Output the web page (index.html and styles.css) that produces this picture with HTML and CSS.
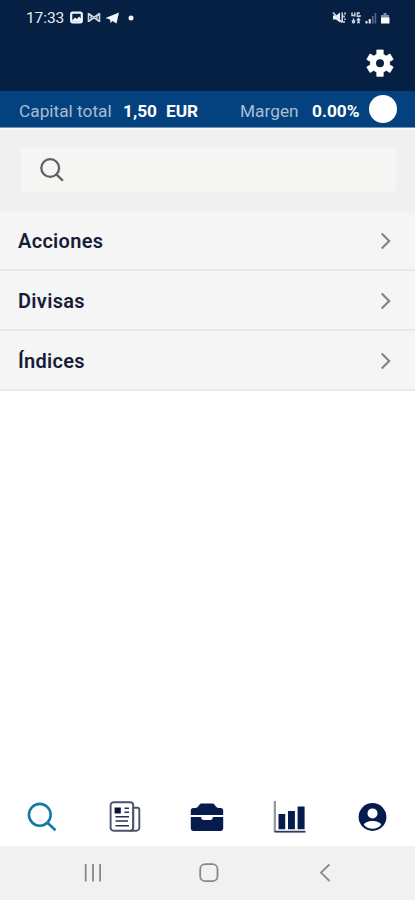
FILE: index.html
```html
<!DOCTYPE html>
<html lang="es">
<head>
<meta charset="utf-8">
<meta name="viewport" content="width=device-width, initial-scale=1">
<title>Mercados</title>
<link rel="stylesheet" href="styles.css">
</head>
<body>
<div class="app">
  <header class="header">
    <div class="status">
      <span class="time">17:33</span>
      <svg class="status-left" width="66" height="16" viewBox="0 0 66 16" fill="none">
        <rect x="1.200" y="2.700" width="10.600" height="9.600" rx="1.600" stroke="#f2f5fa" stroke-width="2.200"/>
        <path d="M2 10.500l3-3 2 1.500 2-2.500 3 3v2H2z" fill="#f2f5fa"/>
        <path d="M18.500 3v9M29.500 3v9M18.500 3.500l5.500 4 5.500-4M18.500 11.500l5.500-4 5.500 4M21 6.500v2M27 6.500v2" stroke="#cbd3e0" stroke-width="1.600"/>
        <path d="M35.500 8L49 2.500l-2.500 11-4-2.500-2 2-.5-3.500z" fill="#f2f5fa"/>
        <circle cx="61" cy="8" r="2.500" fill="#f4f6fa"/>
      </svg>
      <svg class="status-right" width="60" height="16" viewBox="0 0 60 16">
        <path d="M1 5.500h3l4-3v10l-4-3H1z" fill="#eef1f6"/>
        <path d="M1 2.500l9 10M10.200 2.500v10M13 2.500v2M12 5.500v2M13 8.500v1.500M12 11v2" fill="none" stroke="#dce2eb" stroke-width="1.500"/>
        <path d="M20 2.500v3h3.500M22.800 2.500v4M28 3.100h-2.600v3.200H28V4.900M21.500 8.500V12M20 10.500l1.500 2 1.500-2M26.500 12.500V9M25 10.500l1.500-2 1.500 2M20 12.500h3M25 12.500h3" fill="none" stroke="#c8d0de" stroke-width="1.500"/>
        <path d="M33.500 11h2v2.500h-2zM36.700 9h2v4.500h-2z" fill="#e8ecf3"/>
        <path d="M39.900 6h1.800v7.500h-1.800zM42.700 3h1.500v10.500h-1.500z" fill="#566984"/>
        <path d="M49 5h2.500V3h3v2H57v3h-8z" fill="#8492a9"/>
        <path d="M49 7.500h8.500v6H49z" fill="#fff"/>
      </svg>
    </div>
    <div class="toolbar">
      <svg width="32" height="32" viewBox="0 0 32 32"><path d="M12.800 3h6.400v4.400a9.400 9.400 0 0 1 3 1.700L26 6.900l3.200 5.500-3.700 2.200a10 10 0 0 1 0 3.200l3.700 2.200L26 25.500l-3.800-2.200a9.400 9.400 0 0 1-3 1.700v4.300h-6.400V25a9.400 9.400 0 0 1-3-1.700L6 25.500 2.800 20l3.700-2.200a10 10 0 0 1 0-3.200l-3.700-2.200L6 6.900l3.800 2.200a9.400 9.400 0 0 1 3-1.700z" fill="#fff" stroke="#fff" stroke-width=".8" stroke-linejoin="round"/><circle cx="16" cy="16.200" r="4" fill="#062043"/></svg>
    </div>
  </header>

  <section class="account">
    <span class="label capital">Capital total</span>
    <strong class="amount">1,50</strong>
    <strong class="currency">EUR</strong>
    <span class="label margin">Margen</span>
    <strong class="percent">0.00%</strong>
    <span class="dot"></span>
  </section>

  <div class="search-area">
    <div class="search">
      <svg width="26" height="26" viewBox="0 0 26 26" fill="none" stroke="#606060" stroke-width="2.300"><circle cx="10.200" cy="11" r="8.900"/><path d="M16.700 17.600l6.200 6.200"/></svg>
    </div>
  </div>

  <main class="list">
    <div class="row"><span>Acciones</span><svg width="12" height="18" viewBox="0 0 12 18"><path d="M1.700 1.500L9.200 9l-7.500 7.500"/></svg></div>
    <div class="row"><span>Divisas</span><svg width="12" height="18" viewBox="0 0 12 18"><path d="M1.700 1.500L9.200 9l-7.500 7.500"/></svg></div>
    <div class="row"><span>Índices</span><svg width="12" height="18" viewBox="0 0 12 18"><path d="M1.700 1.500L9.200 9l-7.500 7.500"/></svg></div>
  </main>

  <nav class="tabs">
    <svg width="34" height="34" viewBox="0 0 34 34" fill="none" stroke="#147aa5" stroke-width="2.600"><circle cx="14.800" cy="13.800" r="10.900"/><path d="M22.500 21.700l8 7.600"/></svg>
    <svg width="34" height="34" viewBox="0 0 34 34" fill="none" stroke="#4a556b">
      <rect x="2.600" y="1.200" width="22.600" height="28.600" rx="3" stroke-width="1.900"/>
      <path d="M25.200 6.700h4.600a1.500 1.500 0 0 1 1.500 1.500v18.600a3 3 0 0 1-3 3h-4.500q1.400-1 1.400-3z" stroke-width="1.900"/>
      <rect x="6.600" y="6.500" width="6.200" height="6" fill="#06133b" stroke="none"/>
      <path d="M16.500 7.200H21M16.500 11.200H21M7.500 15.700H21M7.500 20H20M7.500 24.800H21" stroke="#26324d" stroke-width="1.600"/>
    </svg>
    <svg width="34" height="34" viewBox="0 0 34 34" fill="#061c4d">
      <path d="M.8 14V9.500q0-2.600 2.600-2.600h2.200q2 0 3-1.800l.8-1.300q.7-1.300 2.200-1.300h10.800q1.500 0 2.200 1.300l.8 1.300q1 1.800 3 1.800h2.200q2.600 0 2.600 2.600V14z"/>
      <path d="M.8 16.100h10.400q0 3 2.500 3h6.600q2.500 0 2.500-3h10.400v11q0 2.900-2.900 2.900H3.700q-2.900 0-2.900-2.900z"/>
    </svg>
    <svg width="34" height="34" viewBox="0 0 34 34">
      <path d="M.7 0H3v31H.7z" fill="#969a9d"/>
      <path d="M1.500 29.800h31v1.800h-31z" fill="#303962"/>
      <path d="M5.500 13h6.700v15.200H5.500zM15 10h6.900v18.200H15zM24.600 5.500h7v22.700h-7z" fill="#061c4d"/>
    </svg>
    <svg width="34" height="34" viewBox="0 0 34 34"><circle cx="17.500" cy="16" r="13.900" fill="#061c4d"/><circle cx="17.500" cy="12.400" r="5" fill="#fff"/><path d="M8.800 23.800C11 18.800 24 18.800 26.200 23.800C22 29 13 29 8.800 23.800z" fill="#fff"/></svg>
  </nav>

  <footer class="system">
    <svg width="18" height="20" viewBox="0 0 18 20"><path d="M1.700 1v17.500M9 1v17.500M16.100 1v17.500"/></svg>
    <svg class="home" width="20" height="20" viewBox="0 0 20 20"><rect x="1.200" y="1.200" width="17.300" height="17" rx="5"/></svg>
    <svg width="12" height="20" viewBox="0 0 12 20"><path d="M10.500 1.300L2 9.600l8.500 8.400"/></svg>
  </footer>
</div>
</body>
</html>
```
FILE: styles.css
```css
* { box-sizing: border-box; }
body {
  margin: 0;
  background: #fff;
  font-family: Roboto, "Liberation Sans", sans-serif;
}
svg { display: block; flex: none; }
.app {
  width: 415px;
  height: 900px;
  display: flex;
  flex-direction: column;
  overflow: hidden;
}
.header { height: 91px; background: #062043; flex: none; }
.status {
  height: 35px;
  display: flex;
  align-items: center;
  padding: 0 23px 0 26px;
}
.time {
  width: 44px;
  color: #e9edf3;
  font-size: 15.500px;
  letter-spacing: -.1px;
}
.status-right { margin-left: auto; }
.toolbar {
  height: 56px;
  display: flex;
  justify-content: flex-end;
  padding: 12px 19px 0 0;
}
.account {
  height: 37px;
  flex: none;
  display: flex;
  align-items: center;
  padding: 3px 17px 0 19px;
  background: #04417f;
  border-bottom: 1px solid #7191b7;
  color: #fff;
  font-size: 17.300px;
  white-space: nowrap;
}
.label { color: #a9bdd2; }
.capital { width: 104px; }
.amount { width: 43px; }
.currency { width: 74px; }
.margin { width: 72px; }
.percent { width: 57px; }
.dot {
  width: 28px;
  height: 28px;
  margin-top: -3px;
  border-radius: 50%;
  background: #fff;
  flex: none;
}
.search-area {
  height: 84px;
  flex: none;
  padding: 18px 19px 0 21px;
  background: #f0f0f0;
  border-top: 2px solid #f8f9fa;
}
.search {
  height: 44px;
  display: flex;
  align-items: center;
  padding-left: 19px;
  border-radius: 4px;
  background: #f5f5f3;
}
.list { flex: 1; }
.row {
  height: 60px;
  display: flex;
  align-items: center;
  justify-content: space-between;
  padding: 2px 23px 0 18px;
  background: #f5f5f5;
  border-bottom: 2px solid #e9e9e9;
  color: #171d39;
  font-size: 20px;
  font-weight: 600;
  letter-spacing: .3px;
}
.row:first-child { height: 59px; padding-top: 0; }
.row svg { fill: none; stroke: #858585; stroke-width: 2.200; }
.tabs {
  height: 58px;
  flex: none;
  display: flex;
  justify-content: space-between;
  padding: 13px 26px 0 25px;
}
.system {
  height: 54px;
  flex: none;
  display: flex;
  align-items: center;
  justify-content: space-between;
  padding: 0 84px;
  background: #f1f1f1;
}
.system svg { fill: none; stroke: #888; stroke-width: 1.800; }
.system .home { margin-right: 4px; }
```
